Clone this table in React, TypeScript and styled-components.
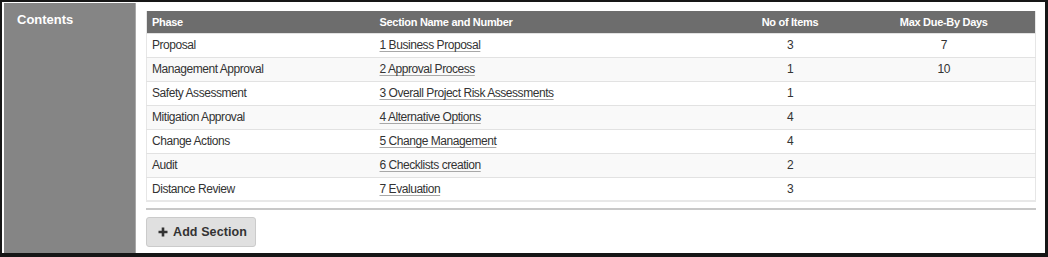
import React from "react";
import styled, { createGlobalStyle } from "styled-components";

const GlobalStyle = createGlobalStyle`
  html, body { margin: 0; padding: 0; background: #ffffff; }
  body { font-family: "Liberation Sans", Arial, sans-serif; }
  * { box-sizing: border-box; }
`;

const Frame = styled.div`
  width: 1048px;
  height: 257px;
  display: flex;
  background: #ffffff;
  border-style: solid;
  border-color: #161616;
  border-width: 2px 3px 4px 2px;
  padding: 1px 0 0 2px;
`;

const Sidebar = styled.aside`
  width: 132px;
  flex-shrink: 0;
  background: #858585;
  border-right: 1px solid #a9a9a9;
  padding: 9px 0 0 13px;
`;

const Title = styled.h2`
  margin: 0;
  font-size: 13px;
  line-height: 15px;
  font-weight: bold;
  color: #ffffff;
`;

const Main = styled.main`
  flex: 1;
  padding: 8px 9px 0 10px;
  display: flex;
  flex-direction: column;
  align-items: flex-start;
`;

const Table = styled.table`
  width: 889px;
  border-collapse: collapse;
  table-layout: fixed;
  border-left: 1px solid #e6e6e6;
  border-right: 1px solid #e6e6e6;
  border-bottom: 2px solid #e8e8e8;
`;

const HeadCell = styled.th<{ $align?: string; $w: number }>`
  width: ${(p) => p.$w}px;
  height: 22px;
  padding: 0 5px;
  background: #6d6d6d;
  color: #ffffff;
  font-size: 11px;
  font-weight: bold;
  letter-spacing: -0.3px;
  text-align: ${(p) => p.$align || "left"};
  vertical-align: middle;
`;

const Row = styled.tr<{ $striped: boolean }>`
  height: 24px;
  background: ${(p) => (p.$striped ? "#f9f9f9" : "#ffffff")};
  border-top: 1px solid #e2e2e2;
`;

const Cell = styled.td<{ $align?: string }>`
  padding: 0 5px;
  font-size: 12px;
  letter-spacing: -0.45px;
  color: #333333;
  text-align: ${(p) => p.$align || "left"};
  vertical-align: middle;
  white-space: nowrap;
`;

const SectionLink = styled.a`
  color: #333333;
  text-decoration: underline;
  text-decoration-color: #a8a8a8;
  text-underline-offset: 2px;
  cursor: pointer;
`;

const Divider = styled.hr`
  width: 890px;
  margin: 6px 0 0 0;
  border: none;
  height: 2px;
  background: #c8c8c8;
`;

const AddButton = styled.button`
  margin-top: 7px;
  height: 30px;
  width: 110px;
  display: flex;
  align-items: center;
  gap: 5px;
  padding: 0 0 0 11px;
  background: #e0e0e0;
  border: 1px solid #cbcbcb;
  border-radius: 3px;
  font-family: "Liberation Sans", Arial, sans-serif;
  font-size: 12.5px;
  font-weight: bold;
  color: #333333;
  letter-spacing: 0.1px;
`;

const PlusIcon = () => (
  <svg width="10" height="10" viewBox="0 0 10 10">
    <path d="M5 0.5 V9.5 M0.5 5 H9.5" stroke="#333" strokeWidth="2.6" />
  </svg>
);

const rows = [
  { phase: "Proposal", section: "1 Business Proposal", items: "3", days: "7" },
  { phase: "Management Approval", section: "2 Approval Process", items: "1", days: "10" },
  { phase: "Safety Assessment", section: "3 Overall Project Risk Assessments", items: "1", days: "" },
  { phase: "Mitigation Approval", section: "4 Alternative Options", items: "4", days: "" },
  { phase: "Change Actions", section: "5 Change Management", items: "4", days: "" },
  { phase: "Audit", section: "6 Checklists creation", items: "2", days: "" },
  { phase: "Distance Review", section: "7 Evaluation", items: "3", days: "" },
];

export default function App() {
  return (
    <>
      <GlobalStyle />
      <Frame>
        <Sidebar>
          <Title>Contents</Title>
        </Sidebar>
        <Main>
          <Table>
            <thead>
              <tr>
                <HeadCell $w={228}>Phase</HeadCell>
                <HeadCell $w={353}>Section Name and Number</HeadCell>
                <HeadCell $w={125} $align="center">No of Items</HeadCell>
                <HeadCell $w={183} $align="center">Max Due-By Days</HeadCell>
              </tr>
            </thead>
            <tbody>
              {rows.map((r, i) => (
                <Row key={r.phase} $striped={i % 2 === 1}>
                  <Cell>{r.phase}</Cell>
                  <Cell>
                    <SectionLink>{r.section}</SectionLink>
                  </Cell>
                  <Cell $align="center">{r.items}</Cell>
                  <Cell $align="center">{r.days}</Cell>
                </Row>
              ))}
            </tbody>
          </Table>
          <Divider />
          <AddButton>
            <PlusIcon />
            Add Section
          </AddButton>
        </Main>
      </Frame>
    </>
  );
}
